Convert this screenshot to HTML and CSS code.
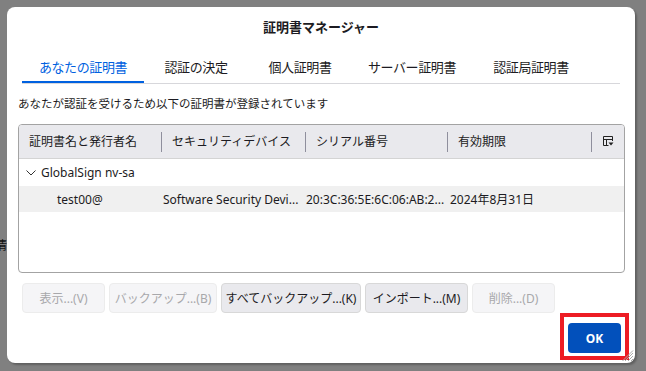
FILE: index.html
```html
<!DOCTYPE html>
<html lang="ja">
<head>
    <meta charset="UTF-8">
    <meta name="viewport" content="width=device-width, initial-scale=1.0">
    <title>証明書マネージャー</title>
    <link rel="stylesheet" href="styles.css">
</head>
<body>
    <span class="behind">情</span>
    <div class="dialog">
        <div class="title">証明書マネージャー</div>
        <ul class="tabs">
            <li class="active t1">あなたの証明書</li>
            <li class="t2">認証の決定</li>
            <li class="t3">個人証明書</li>
            <li class="t4">サーバー証明書</li>
            <li class="t5">認証局証明書</li>
        </ul>
        <div class="content">
            <p class="desc">あなたが認証を受けるため以下の証明書が登録されています</p>
            <div class="table">
                <div class="head">
                    <div class="col c1">証明書名と発行者名</div>
                    <div class="col c2">セキュリティデバイス</div>
                    <div class="col c3">シリアル番号</div>
                    <div class="col c4">有効期限</div>
                    <div class="col c5">
                        <svg width="11" height="11" viewBox="0 0 11 11">
                            <path d="M0.5 0.5h9v4.5M0.5 0.5v9h5M0.5 3.5h9M3.5 3.5v6" fill="none" stroke="#222" stroke-width="1"/>
                            <path d="M5.5 6.5h5l-2.5 3z" fill="#222"/>
                        </svg>
                    </div>
                </div>
                <div class="row group">
                    <span class="chev"><svg width="10" height="6" viewBox="0 0 10 6"><path d="M0.5 0.5l4.5 4.5 4.5-4.5" fill="none" stroke="#333" stroke-width="1"/></svg></span>GlobalSign nv-sa
                </div>
                <div class="row item">
                    <div class="cell c1"><span class="indent">test00@</span></div>
                    <div class="cell c2">Software Security Devi...</div>
                    <div class="cell c3">20:3C:36:5E:6C:06:AB:2...</div>
                    <div class="cell c4">2024年8月31日</div>
                </div>
            </div>
            <div class="buttons">
                <button class="btn off b1">表示...(V)</button>
                <button class="btn off b2">バックアップ...(B)</button>
                <button class="btn b3">すべてバックアップ...(K)</button>
                <button class="btn b4">インポート...(M)</button>
                <button class="btn off b5">削除...(D)</button>
            </div>
        </div>
        <div class="footer">
            <div class="mark"><button class="ok">OK</button></div>
        </div>
        <svg class="grip" width="12" height="12" viewBox="0 0 12 12">
            <path d="M11 3L3 11M11 6L6 11M11 9L9 11M11 0.5L0.5 11" stroke="#aaa" stroke-width="1"/>
        </svg>
    </div>
</body>
</html>
```

FILE: styles.css
```css
* {
    margin: 0;
    padding: 0;
    box-sizing: border-box;
}
ul, li {
    list-style: none;
}
body {
    width: 646px;
    height: 371px;
    overflow: hidden;
    background: #808080;
    font-family: "Noto Sans", "Noto Sans CJK JP", sans-serif;
    font-size: 12px;
    color: #1c1b22;
    position: relative;
}
.behind {
    position: absolute;
    left: -5px;
    top: 236px;
    font-size: 12px;
    color: #111;
}
.dialog {
    position: relative;
    margin: 7px 0 0 7px;
    width: 628px;
    height: 356px;
    background: #fff;
    border-radius: 8px;
    box-shadow: 2px 2px 2px rgba(0, 0, 0, .25);
    display: flex;
    flex-direction: column;
}
.title {
    padding-top: 10px;
    line-height: 20px;
    height: 40px;
    text-align: center;
    font-size: 13px;
    font-weight: bold;
}
.tabs {
    display: flex;
    margin: 0 15px;
    border-bottom: 1px solid #d7d7db;
}
.tabs li {
    padding: 12px 0 8px;
    line-height: 16px;
    font-size: 13px;
    text-align: center;
    letter-spacing: -0.4px;
}
.tabs .t1 { width: 122px; }
.tabs .t2 { width: 104px; }
.tabs .t3 { width: 104px; }
.tabs .t4 { width: 120px; }
.tabs .t5 { width: 118px; }
.tabs li.active {
    color: #0061e0;
    box-shadow: inset 0 -2px 0 #0061e0;
}
.content {
    padding: 11px 10px 0 11px;
}
.desc {
    line-height: 18px;
    font-size: 11.5px;
}
.table {
    margin-top: 11px;
    height: 149px;
    border: 1px solid #a3a3a3;
    border-radius: 4px;
    overflow: hidden;
}
.head {
    display: flex;
    height: 34px;
    background: #e9e9ed;
    border-bottom: 1px solid #d4d4d4;
    align-items: center;
}
.col {
    padding-left: 10px;
    line-height: 20px;
    border-left: 1px solid #8f8f9d;
}
.head .c1 {
    border-left: none;
}
.c1 { width: 142px; }
.c2 { width: 144px; }
.c3 { width: 142px; }
.c4 { width: 144px; }
.c5 { flex: 1; display: flex; align-items: center; padding-left: 11px; height: 20px; }
.row {
    display: flex;
    align-items: center;
}
.group {
    height: 27px;
    padding-left: 7px;
}
.chev {
    display: inline-flex;
    width: 15px;
}
.item {
    height: 26px;
    background: #f0f0f0;
}
.cell {
    white-space: nowrap;
    overflow: hidden;
}
.item .c2 { padding-left: 2px; }
.item .c3 { padding-left: 1px; }
.item .c4 { padding-left: 3px; }
.indent {
    padding-left: 38px;
}
.buttons {
    display: flex;
    gap: 4px;
    margin-top: 10px;
    padding-left: 4px;
}
.btn {
    height: 30px;
    border-radius: 4px;
    border: 1px solid #d8d8d8;
    background: #e9e9ed;
    color: #1c1b22;
    font-family: inherit;
    font-size: 12px;
}
.btn.off {
    background: #f5f5f7;
    border-color: #ececec;
    color: #a8a8ab;
}
.b1 { width: 83px; }
.b2 { width: 108px; }
.b3 { width: 140px; }
.b4 { width: 103px; }
.b5 { width: 83px; }
.footer {
    margin-top: auto;
    margin-bottom: 3px;
    display: flex;
    justify-content: flex-end;
    padding-right: 6px;
}
.mark {
    border: 4px solid #ed1c24;
    padding: 6px 4px 3px;
}
.ok {
    display: block;
    width: 53px;
    height: 30px;
    border: none;
    border-radius: 4px;
    background: #0250bb;
    color: #fff;
    font-family: inherit;
    font-size: 12px;
    font-weight: bold;
}
.grip {
    position: absolute;
    right: 1px;
    bottom: 1px;
}
```
